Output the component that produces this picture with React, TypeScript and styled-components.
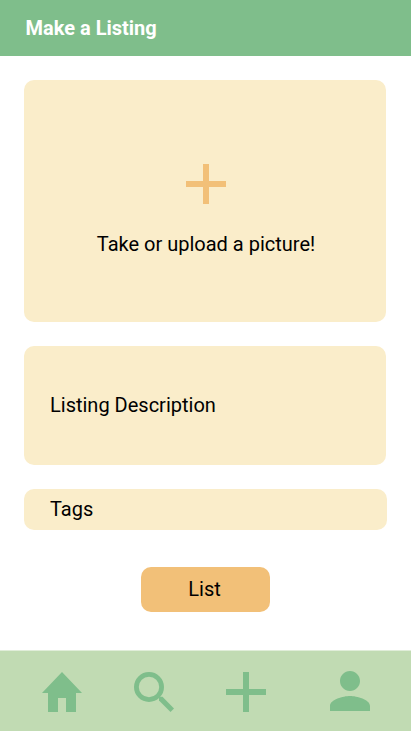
import React from "react";
import styled, { createGlobalStyle } from "styled-components";

const GlobalStyle = createGlobalStyle`
  * { box-sizing: border-box; }
  body { margin: 0; font-family: Roboto, sans-serif; background: #fff; color: #000; }
`;

const Screen = styled.div`
  display: flex;
  flex-direction: column;
  height: 731px;
  background: #fff;
  overflow: hidden;
`;

const Header = styled.header`
  display: flex;
  align-items: center;
  height: 56px;
  padding-left: 25.5px;
  background: #7fbe8b;
`;

const Title = styled.h1`
  margin: 0;
  font-size: 20px;
  line-height: 24px;
  font-weight: 700;
  color: #fff;
`;

const Form = styled.main`
  flex: 1;
  display: flex;
  flex-direction: column;
  align-items: flex-start;
  gap: 24px;
  padding: 24px 24px 0;
`;

const Upload = styled.section`
  display: flex;
  flex-direction: column;
  align-items: center;
  width: 362px;
  height: 242px;
  padding: 84px 0 0 2px;
  gap: 28px;
  border-radius: 10px;
  background: #faedca;
  font-size: 20px;
  line-height: 24px;
`;

const Field = styled.div<{ $width: number; $height: number }>`
  display: flex;
  align-items: center;
  width: ${(p) => p.$width}px;
  height: ${(p) => p.$height}px;
  padding: 0 0 2px 26px;
  border-radius: 10px;
  background: #faedca;
  font-size: 20px;
  line-height: 24px;
`;

const ListButton = styled.button`
  width: 129px;
  height: 45px;
  margin: 13px 0 0 117px;
  padding: 0 2px 2px 0;
  border: 0;
  border-radius: 10px;
  background: #f2c078;
  font: 20px/24px Roboto, sans-serif;
  color: #000;
`;

const NavBar = styled.nav`
  display: flex;
  gap: 52px;
  height: 81px;
  padding: 21px 0 0 42px;
  border-top: 1px solid #e0edd9;
  background: #c1dbb3;
`;

const Icon = styled.svg`
  display: block;
  width: 40px;
  height: 40px;
  overflow: visible;
`;

const ProfileIcon = styled(Icon)`
  margin: -1px 0 0 12px;
`;

export default function App() {
  return (
    <Screen>
      <GlobalStyle />
      <Header><Title>Make a Listing</Title></Header>
      <Form>
        <Upload>
          <Icon viewBox="0 0 40 40" fill="#f2c078"><path d="M17 0h6v17h17v6H23v17h-6V23H0v-6h17z" /></Icon>
          <span>Take or upload a picture!</span>
        </Upload>
        <Field $width={362} $height={119}>Listing Description</Field>
        <Field $width={363} $height={41}>Tags</Field>
        <ListButton>List</ListButton>
      </Form>
      <NavBar>
        <Icon viewBox="0 0 40 40" fill="#7fbe8b"><path d="M20 0 40 21H34V40H24V26H16V40H6V21H0z" /></Icon>
        <Icon viewBox="0 0 40 40" fill="#7fbe8b">
          <circle cx="15" cy="15" r="12.6" fill="none" stroke="#7fbe8b" strokeWidth="4.8" />
          <path d="M25 28.5V25.2L25.8 24.8H28.5L40 36.5 36.5 40z" />
        </Icon>
        <Icon viewBox="0 0 40 40" fill="#7fbe8b"><path d="M17 0h6v17h17v6H23v17h-6V23H0v-6h17z" /></Icon>
        <ProfileIcon viewBox="4 4 16 16" fill="#7fbe8b"><path d="M12 12c2.21 0 4-1.79 4-4s-1.79-4-4-4-4 1.79-4 4 1.79 4 4 4m0 2c-2.67 0-8 1.34-8 4v2h16v-2c0-2.66-5.33-4-8-4" /></ProfileIcon>
      </NavBar>
    </Screen>
  );
}
